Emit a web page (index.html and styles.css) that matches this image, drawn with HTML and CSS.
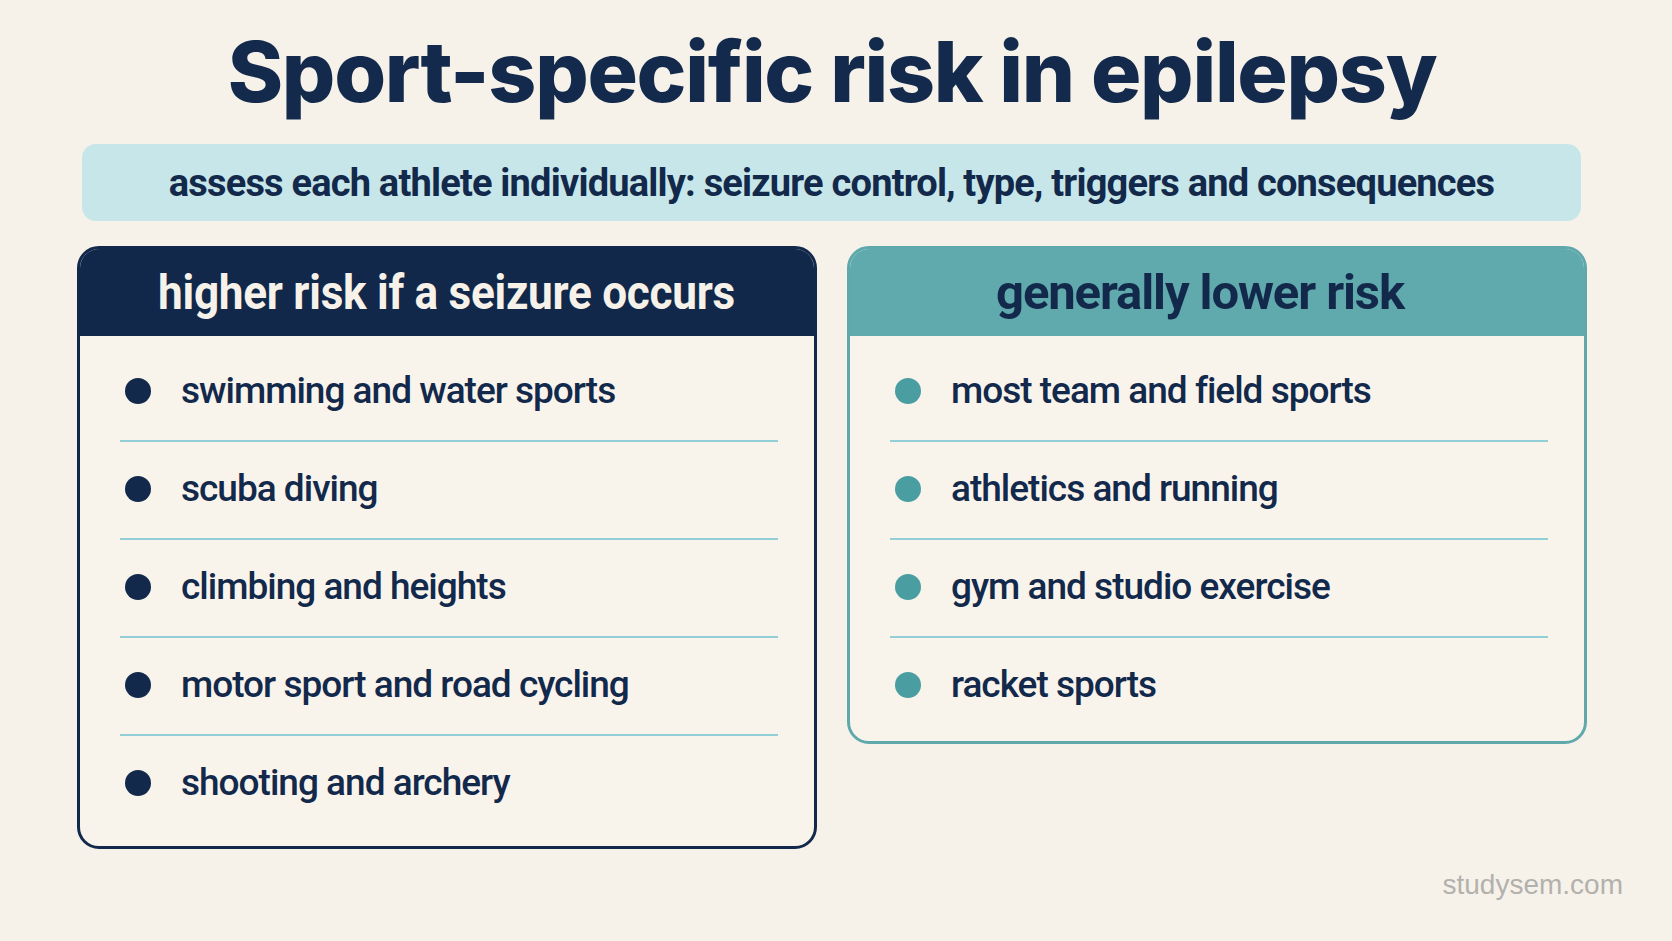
FILE: index.html
```html
<!DOCTYPE html>
<html lang="en">
<head>
<meta charset="utf-8">
<title>Sport-specific risk in epilepsy</title>
<link rel="stylesheet" href="styles.css">
</head>
<body>
<div class="page">
  <h1 class="title">Sport-specific risk in epilepsy</h1>
  <div class="banner">assess each athlete individually: seizure control, type, triggers and consequences</div>
  <div class="cards">
    <section class="card card-high">
      <div class="card-head"><span class="head-text">higher risk if a seizure occurs</span></div>
      <ul class="card-list">
        <li class="item"><span class="dot"></span>swimming and water sports</li>
        <li class="item"><span class="dot"></span>scuba diving</li>
        <li class="item"><span class="dot"></span>climbing and heights</li>
        <li class="item"><span class="dot"></span>motor sport and road cycling</li>
        <li class="item"><span class="dot"></span>shooting and archery</li>
      </ul>
    </section>
    <section class="card card-low">
      <div class="card-head"><span class="head-text">generally lower risk</span></div>
      <ul class="card-list">
        <li class="item"><span class="dot"></span>most team and field sports</li>
        <li class="item"><span class="dot"></span>athletics and running</li>
        <li class="item"><span class="dot"></span>gym and studio exercise</li>
        <li class="item"><span class="dot"></span>racket sports</li>
      </ul>
    </section>
  </div>
  <div class="watermark">studysem.com</div>
</div>
</body>
</html>
```

FILE: styles.css
```css
html, body {
  margin: 0;
  padding: 0;
}
body {
  background: #f6f2ea;
  color: #13294b;
  font-family: Roboto, "Liberation Sans", sans-serif;
}
.page {
  width: 1510px;
  height: 941px;
  margin-left: 77px;
  box-sizing: border-box;
  display: flex;
  flex-direction: column;
}
.title {
  margin: 0;
  padding-top: 30px;
  font-family: Inter, Roboto, sans-serif;
  font-weight: 800;
  font-size: 84px;
  line-height: 84px;
  letter-spacing: -1.3px;
  text-align: center;
  color: #132a4c;
}
.banner {
  margin: 30px 6px 0 5px;
  height: 77px;
  border-radius: 14px;
  background: #c6e6e9;
  display: flex;
  align-items: center;
  justify-content: center;
  font-family: Roboto, sans-serif;
  font-weight: 700;
  font-size: 38px;
  letter-spacing: -0.8px;
  color: #13294b;
}
.cards {
  margin-top: 25px;
  display: flex;
  gap: 30px;
  align-items: flex-start;
}
.card {
  width: 740px;
  box-sizing: border-box;
  border: 3px solid #13294b;
  border-radius: 22px;
  overflow: hidden;
  background: #f8f4ec;
}
.card-head {
  height: 87px;
  display: flex;
  align-items: center;
  justify-content: center;
  font-family: Roboto, sans-serif;
  font-weight: 700;
  font-size: 49px;
}
.head-text {
  display: inline-block;
  white-space: nowrap;
}
.card-list {
  list-style: none;
  margin: 0;
  padding: 8px 36px 14px 40px;
}
.item {
  height: 93px;
  padding-bottom: 3px;
  display: flex;
  align-items: center;
  border-bottom: 2px solid #93cfd6;
  font-size: 37px;
  font-weight: 500;
  letter-spacing: -1px;
  color: #13294b;
}
.item:last-child {
  border-bottom: none;
}
.dot {
  width: 26px;
  height: 26px;
  border-radius: 50%;
  margin: 0 30px 0 5px;
  flex: none;
}
.card-high .card-head {
  background: #11284a;
  color: #f7f2e9;
}
.card-high .head-text {
  letter-spacing: -0.3px;
  transform: scaleX(0.9);
}
.card-high .dot {
  background: #13294b;
}
.card-low {
  border-color: #5fa8ab;
}
.card-low .card-head {
  background: #60a9ad;
  color: #13294b;
  padding-right: 34px;
}
.card-low .head-text {
  letter-spacing: -1.1px;
}
.card-low .card-list {
  padding-bottom: 7px;
}
.card-low .dot {
  background: #4a9ea1;
}
.watermark {
  margin-top: 20px;
  align-self: flex-end;
  margin-right: -36px;
  font-family: "Liberation Sans", Arial, sans-serif;
  font-size: 28px;
  line-height: 32px;
  color: #b2b1ad;
}
```
